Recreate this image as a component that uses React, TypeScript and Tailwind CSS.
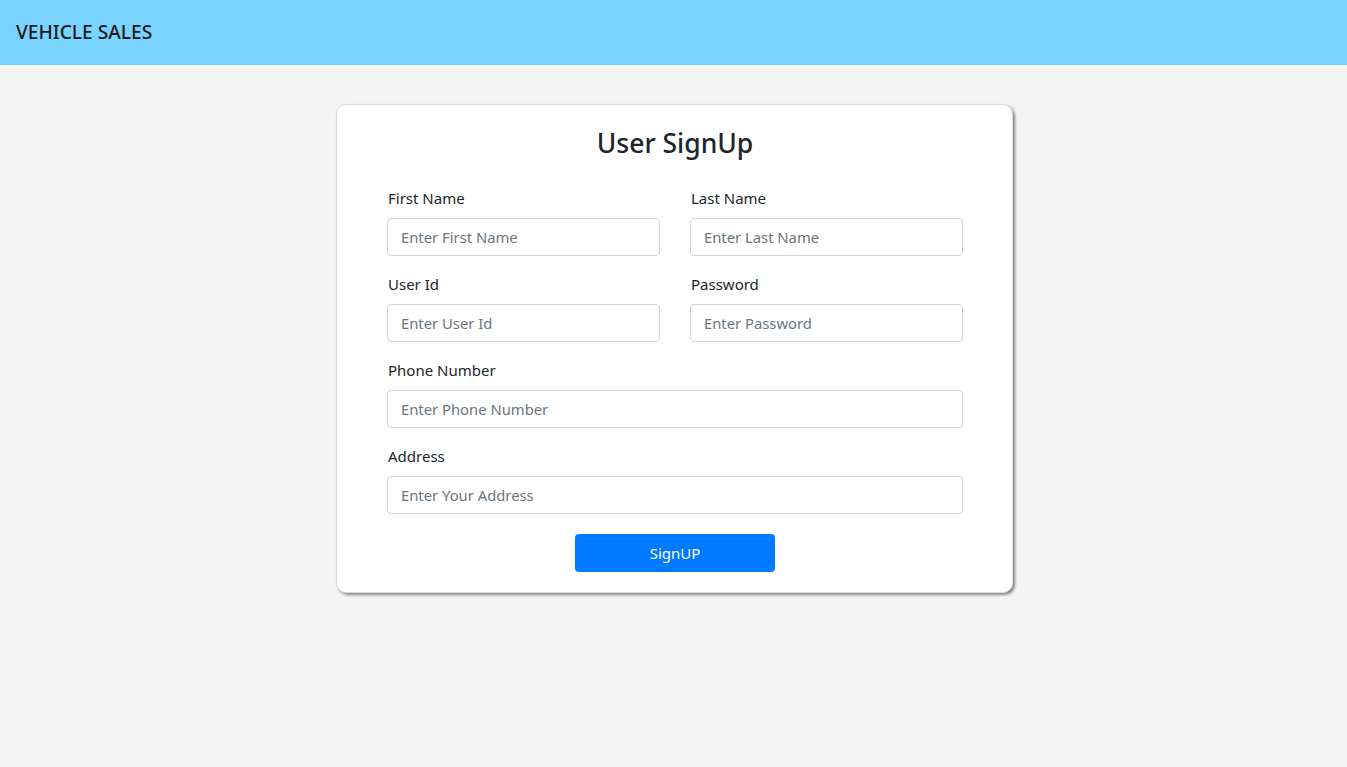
const fields = [
  { label: 'First Name', placeholder: 'Enter First Name' },
  { label: 'Last Name', placeholder: 'Enter Last Name' },
  { label: 'User Id', placeholder: 'Enter User Id' },
  { label: 'Password', placeholder: 'Enter Password', type: 'password' },
];

function Field({ label, placeholder, type = 'text' }: { label: string; placeholder: string; type?: string }) {
  return (
    <div className="mb-4">
      <label className="block mb-2 pl-px text-[15px] leading-6 text-[#212529]">{label}</label>
      <input
        type={type}
        placeholder={placeholder}
        className="block w-full h-[38px] px-[13px] text-[14.8px] rounded-[4px] border border-[#ced4da] bg-white text-[#495057] placeholder:text-[#6c757d] outline-none"
      />
    </div>
  );
}

export default function App() {
  return (
    <div className="min-h-screen bg-[#f4f4f4] font-['Segoe_UI','Noto_Sans',sans-serif] text-[#212529]">
      <header className="h-[65px] bg-[#79d3ff] flex items-center px-4">
        <h1 className="text-[19.2px] font-medium text-[#1a1a1a]">VEHICLE SALES</h1>
      </header>

      <div className="flex justify-center pt-[39px] pl-[2px]">
        <div className="w-[677px] bg-white border border-[#dcdcdc] rounded-[10px] shadow-[2px_2px_3px_rgba(0,0,0,0.45)] pl-[50px] pr-[49px] pt-[21px] pb-[20px]">
          <h2 className="text-center text-[26.5px] leading-[34px] font-medium mb-[26px]">User SignUp</h2>
          <form onSubmit={(e) => e.preventDefault()}>
            <div className="grid grid-cols-2 gap-x-[30px]">
              {fields.map((f) => (
                <Field key={f.label} {...f} />
              ))}
            </div>
            <Field label="Phone Number" placeholder="Enter Phone Number" />
            <Field label="Address" placeholder="Enter Your Address" />
            <div className="flex justify-center pt-1">
              <button
                type="submit"
                className="w-[200px] h-[38px] rounded-[4px] bg-[#007bff] text-white text-[15px]"
              >
                SignUP
              </button>
            </div>
          </form>
        </div>
      </div>
    </div>
  );
}
